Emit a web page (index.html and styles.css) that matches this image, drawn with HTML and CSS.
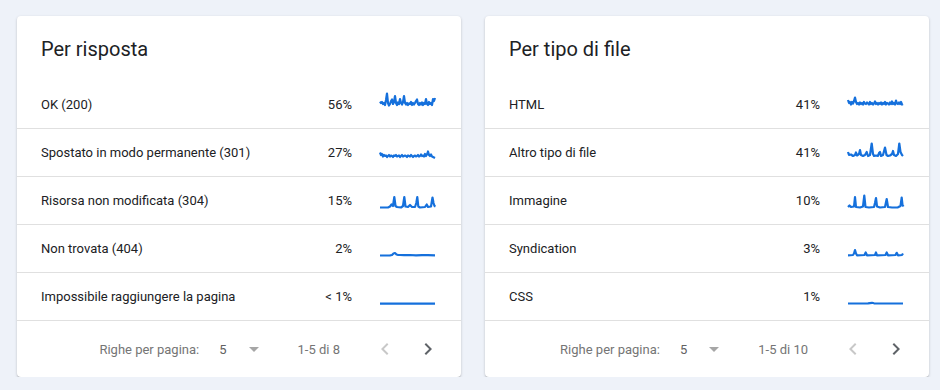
FILE: index.html
```html
<!DOCTYPE html>
<html lang="it">
<head>
<meta charset="utf-8">
<title>Statistiche</title>
<link rel="stylesheet" href="styles.css">
</head>
<body>
<div class="board">
  <section class="card">
    <h2 class="card-title">Per risposta</h2>
    <div class="rows">
      <div class="row">
        <span class="label">OK (200)</span><span class="pct">56%</span>
        <svg class="spark" viewBox="0 0 56 24"><polyline points="0,9.7 1,11 2,10 3,12 4,11 5,13 6,8 7,1.5 8,11 9,13.5 10,12 11,9 12,7.5 13,12 14,10 15,4 16,11 17,13 18,10.5 19,12 20,7 21,11 22,12.5 23,10 24,4 25,11 26,12.5 27,11 28,13 29,11.5 30,12 31,10 32,13 33,11 34,12.5 35,11 36,9 37,7.5 38,12 39,13 40,11 41,12.5 42,10.5 43,13 44,11 45,12 46,7 47,12 48,13 49,10 50,12 51,11 52,13 53,7 54,9 55,6"/></svg>
      </div>
      <div class="row">
        <span class="label">Spostato in modo permanente (301)</span><span class="pct">27%</span>
        <svg class="spark" viewBox="0 0 56 24"><polyline points="0,11.5 1,14 2,13 3,15.5 4,14 5,15 6,14.5 7,16 8,15 9,14 10,15.5 11,14.5 12,15 13,16 14,14.5 15,15 16,14 17,15.5 18,15 19,14.5 20,16 21,15 22,14 23,15.5 24,15 25,14.5 26,15 27,16 28,14.5 29,15 30,15.5 31,14 32,15 33,16 34,15 35,14.5 36,15.5 37,15 38,14 39,15.5 40,15 41,13.5 42,15 43,14.5 44,15.5 45,13 46,15 47,13.5 48,10.5 49,14 50,15 51,13.5 52,15.5 53,16 54,16.5 55,17"/></svg>
      </div>
      <div class="row">
        <span class="label">Risorsa non modificata (304)</span><span class="pct">15%</span>
        <svg class="spark" viewBox="0 0 56 24"><polyline points="0,18.5 8,18.5 10,17.5 11.5,15.5 13,17 14.3,8 15.5,17 17,18 21,18.5 23,17 24.3,8 25.5,17.5 28,18 30,16 32,18 35,18 36.3,14 37.3,8 38.3,17.5 40,18.5 45,18 46.7,15.5 48,18 51,17.5 52.5,8.5 53.5,14 54.5,17 55.5,17.5"/></svg>
      </div>
      <div class="row">
        <span class="label">Non trovata (404)</span><span class="pct">2%</span>
        <svg class="spark" viewBox="0 0 56 24"><polyline points="0,18.5 10,18.3 12,18 13.5,16.5 15,16 16.5,17.5 18,17.8 20,18 24,18.2 30,18 36,18.3 42,18.1 48,18.2 55,18.3"/></svg>
      </div>
      <div class="row">
        <span class="label">Impossibile raggiungere la pagina</span><span class="pct">&lt; 1%</span>
        <svg class="spark" viewBox="0 0 56 24"><polyline points="0,18.7 55,18.7"/></svg>
      </div>
    </div>
    <div class="pager">
      <span class="pager-label">Righe per pagina:</span>
      <span class="pager-size">5</span>
      <svg class="icon drop" viewBox="0 0 24 24"><path d="M7 10l5 5 5-5z"/></svg>
      <span class="pager-range">1-5 di 8</span>
      <svg class="icon prev" viewBox="0 0 24 24"><path d="M15.41 7.41L14 6l-6 6 6 6 1.41-1.41L10.83 12z"/></svg>
      <svg class="icon next" viewBox="0 0 24 24"><path d="M10 6L8.59 7.41 13.17 12l-4.58 4.59L10 18l6-6z"/></svg>
    </div>
  </section>

  <section class="card">
    <h2 class="card-title">Per tipo di file</h2>
    <div class="rows">
      <div class="row">
        <span class="label">HTML</span><span class="pct">41%</span>
        <svg class="spark" viewBox="0 0 56 24"><polyline points="0,8 1,11 2,10 3,12.5 4,10 5,11.5 6,9 7,5.5 8,10 9,12 10,11 11,12.5 12,10.5 13,12 14,11 15,12.5 16,10 17,11.5 18,12 19,10.5 20,11.5 21,12.5 22,10 23,12 24,11 25,12.5 26,11.5 27,9.5 28,12 29,11 30,12.5 31,11 32,12 33,10.5 34,12.5 35,11 36,12 37,10 38,12.5 39,11 40,11.5 41,12.5 42,10.5 43,12 44,9.5 45,12 46,11 47,12.5 48,8.5 49,11.5 50,12 51,10.5 52,12 53,10 54,12.5 55,12"/></svg>
      </div>
      <div class="row">
        <span class="label">Altro tipo di file</span><span class="pct">41%</span>
        <svg class="spark" viewBox="0 0 56 24"><polyline points="0,11 1,14 3,13.5 5,15 7,14 8,11.5 9,14.5 11,13 12,9 13,14 15,15 17,14 18.7,11 20,15 22,14 23.7,2.5 25,13 26,15 28,14.5 30,15 31,12 32,11 33,15 35,14 37,6.5 38.5,14 40,15 42,14.5 44,13 45,10 46,14 48,15 50,13 51.3,2.5 52.5,11 54,14 55,15"/></svg>
      </div>
      <div class="row">
        <span class="label">Immagine</span><span class="pct">10%</span>
        <svg class="spark" viewBox="0 0 56 24"><polyline points="0,18 1.5,16.5 3,18 6,17.5 7,8 8,18 12,18.5 15,17.5 16.3,6.5 17.5,18 21,18.5 26,18 27,14 28,9 29,17.5 32,18.5 37,18 38.7,10 40,18 44,18.5 50,18.3 52.5,17 53.7,8.5 54.5,16 55.5,17.5"/></svg>
      </div>
      <div class="row">
        <span class="label">Syndication</span><span class="pct">3%</span>
        <svg class="spark" viewBox="0 0 56 24"><polyline points="0,18.3 5,18 6,16.5 7,13 8,16.5 9,18.3 16.5,18 17.7,15.5 19,18.3 27,18 28,15.5 29,18.3 37.5,18 38.7,15.5 40,18.3 47.5,18 48.7,15.8 50,18.3 54,18 55,16.5"/></svg>
      </div>
      <div class="row">
        <span class="label">CSS</span><span class="pct">1%</span>
        <svg class="spark" viewBox="0 0 56 24"><polyline points="0,18.5 20,18.3 24,17.8 26,18.3 55,18.5"/></svg>
      </div>
    </div>
    <div class="pager">
      <span class="pager-label">Righe per pagina:</span>
      <span class="pager-size">5</span>
      <svg class="icon drop" viewBox="0 0 24 24"><path d="M7 10l5 5 5-5z"/></svg>
      <span class="pager-range">1-5 di 10</span>
      <svg class="icon prev" viewBox="0 0 24 24"><path d="M15.41 7.41L14 6l-6 6 6 6 1.41-1.41L10.83 12z"/></svg>
      <svg class="icon next" viewBox="0 0 24 24"><path d="M10 6L8.59 7.41 13.17 12l-4.58 4.59L10 18l6-6z"/></svg>
    </div>
  </section>
</div>
</body>
</html>
```

FILE: styles.css
```css
* {
  box-sizing: border-box;
}

html, body {
  margin: 0;
  padding: 0;
}

body {
  background: #eef2f9;
  font-family: Roboto, "Liberation Sans", Arial, sans-serif;
  color: #202124;
}

.board {
  display: flex;
  gap: 24px;
  padding: 16px 0 0 17px;
}

.card {
  flex: 0 0 444px;
  width: 444px;
  background: #ffffff;
  border-radius: 4px;
  box-shadow: 0 1px 3px rgba(0, 0, 0, 0.18), 0 1px 1px rgba(0, 0, 0, 0.10), 0 2px 1px -1px rgba(0, 0, 0, 0.10);
  display: flex;
  flex-direction: column;
}

.card-title {
  margin: 0;
  height: 64px;
  padding: 19px 24px 0 24px;
  font-size: 20px;
  line-height: 28px;
  font-weight: 400;
  color: #202124;
}

.rows {
  display: flex;
  flex-direction: column;
}

.row {
  display: flex;
  align-items: center;
  height: 48px;
  padding: 0 25px 0 24px;
  font-size: 13px;
  color: #202124;
}

.row + .row {
  border-top: 1px solid #e0e0e0;
}

.label {
  flex: 1;
  white-space: nowrap;
}

.pct {
  text-align: right;
  white-space: nowrap;
}

.spark {
  width: 56px;
  height: 24px;
  margin-left: 28px;
  flex: 0 0 56px;
  overflow: visible;
}

.spark polyline {
  fill: none;
  stroke: #1570dc;
  stroke-width: 2.2;
  stroke-linejoin: round;
  stroke-linecap: butt;
}

.pager {
  display: flex;
  align-items: center;
  justify-content: flex-end;
  height: 57px;
  padding-right: 21px;
  border-top: 1px solid #e0e0e0;
  font-size: 13px;
  color: #757575;
}

.pager-label {
  margin-right: 20px;
}

.pager-size {
  color: #616161;
}

.icon {
  width: 24px;
  height: 24px;
  flex: 0 0 24px;
}

.drop {
  margin-left: 15px;
  fill: #a6a6a6;
}

.pager-range {
  margin-left: 32px;
}

.prev {
  margin-left: 33px;
  fill: #c8c8c8;
}

.next {
  margin-left: 19px;
  fill: #5f6368;
}
```
